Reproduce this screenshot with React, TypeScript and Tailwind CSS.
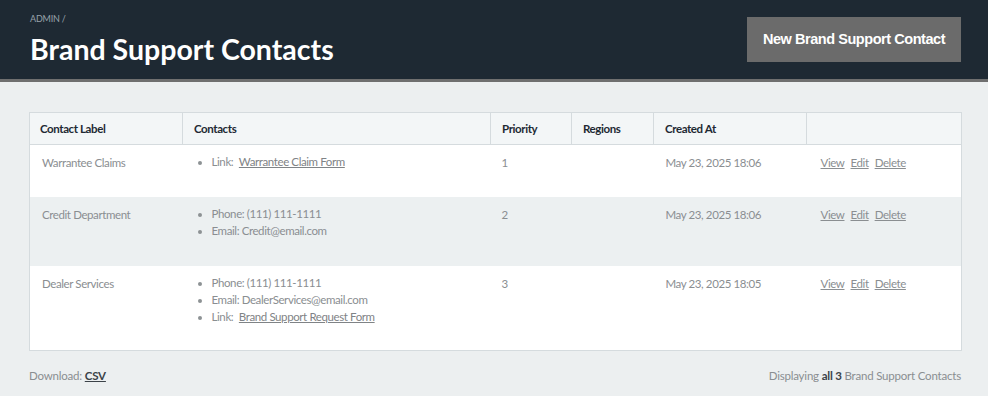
import React from "react";

const font = { fontFamily: '"Lato", "Noto Sans", sans-serif' };

function Contacts({ items }: { items: { label: string; value: string; link?: boolean }[] }) {
  return (
    <ul className="list-disc pl-[18px] m-0 marker:text-[#8d9294]">
      {items.map((it, i) => (
        <li key={i} className="leading-[17px]">
          {it.label}
          {it.link ? (
            <>
              {" "}
              <a className="underline ml-[3px] text-[#7f8386]">{it.value}</a>
            </>
          ) : (
            " " + it.value
          )}
        </li>
      ))}
    </ul>
  );
}

const rows = [
  {
    label: "Warrantee Claims",
    contacts: [{ label: "Link:", value: "Warrantee Claim Form", link: true }],
    priority: "1",
    created: "May 23, 2025 18:06",
    bg: "bg-white",
    h: "h-[52px]",
  },
  {
    label: "Credit Department",
    contacts: [
      { label: "Phone:", value: "(111) 111-1111" },
      { label: "Email:", value: "Credit@email.com" },
    ],
    priority: "2",
    created: "May 23, 2025 18:06",
    bg: "bg-[#ecf0f1]",
    h: "h-[69px]",
  },
  {
    label: "Dealer Services",
    contacts: [
      { label: "Phone:", value: "(111) 111-1111" },
      { label: "Email:", value: "DealerServices@email.com" },
      { label: "Link:", value: "Brand Support Request Form", link: true },
    ],
    priority: "3",
    created: "May 23, 2025 18:05",
    bg: "bg-white",
    h: "h-[85px]",
  },
];

export default function App() {
  return (
    <div className="w-[988px] h-[396px] bg-[#eceff0] overflow-hidden" style={font}>
      <div className="bg-[#1e2933] h-[79px] flex items-start justify-between pl-[30px] pr-[27px]">
        <div>
          <div className="text-[9px] text-[#98a2aa] mt-[12px] tracking-[-0.2px]">ADMIN /</div>
          <h1 className="text-[28.5px] font-bold text-white leading-[34px] mt-[6px]">Brand Support Contacts</h1>
        </div>
        <button
          className="mt-[17px] w-[214px] h-[45px] bg-[#6b6b6b] text-white font-bold text-[14.5px] tracking-[-0.45px]"
          style={{ fontFamily: '"Liberation Sans", Arial, sans-serif' }}
        >
          New Brand Support Contact
        </button>
      </div>
      <div className="h-[3px] bg-[#6f6f6f]" />
      <div className="px-[29px] pt-[30px]">
        <table className="w-[932px] border-collapse border border-[#d5dbde] text-[11.5px] tracking-[-0.4px] text-[#8a8e91] table-fixed">
          <colgroup>
            <col className="w-[153px]" />
            <col className="w-[308px]" />
            <col className="w-[81px]" />
            <col className="w-[82px]" />
            <col className="w-[153px]" />
            <col className="w-[155px]" />
          </colgroup>
          <thead>
            <tr className="bg-[#f3f6f7] h-[32px] text-[#1e2933] font-bold text-left">
              <th className="border border-[#d5dbde] pl-[10px] font-bold">Contact Label</th>
              <th className="border border-[#d5dbde] pl-[11px] font-bold">Contacts</th>
              <th className="border border-[#d5dbde] pl-[11px] font-bold">Priority</th>
              <th className="border border-[#d5dbde] pl-[11px] font-bold">Regions</th>
              <th className="border border-[#d5dbde] pl-[11px] font-bold">Created At</th>
              <th className="border border-[#d5dbde]"></th>
            </tr>
          </thead>
          <tbody>
            {rows.map((r, i) => (
              <tr key={i} className={`${r.bg} ${r.h} align-top`}>
                <td className="pl-[12px] pt-[9px]">{r.label}</td>
                <td className="pl-[11px] pt-[8px]">
                  <Contacts items={r.contacts} />
                </td>
                <td className="pl-[11px] pt-[9px]">{r.priority}</td>
                <td className="pl-[11px] pt-[9px]"></td>
                <td className="pl-[12px] pt-[9px]">{r.created}</td>
                <td className="pl-[14px] pt-[9px]">
                  <a className="underline mr-[6px]">View</a>
                  <a className="underline mr-[6px]">Edit</a>
                  <a className="underline">Delete</a>
                </td>
              </tr>
            ))}
          </tbody>
        </table>
        <div className="flex justify-between mt-[16px] text-[11.5px] tracking-[-0.2px] text-[#8a8e91] w-[932px]">
          <div>
            Download: <a className="underline font-bold text-[#3b4248]">CSV</a>
          </div>
          <div>
            Displaying <b className="text-[#3b4248]">all 3</b> Brand Support Contacts
          </div>
        </div>
      </div>
    </div>
  );
}
